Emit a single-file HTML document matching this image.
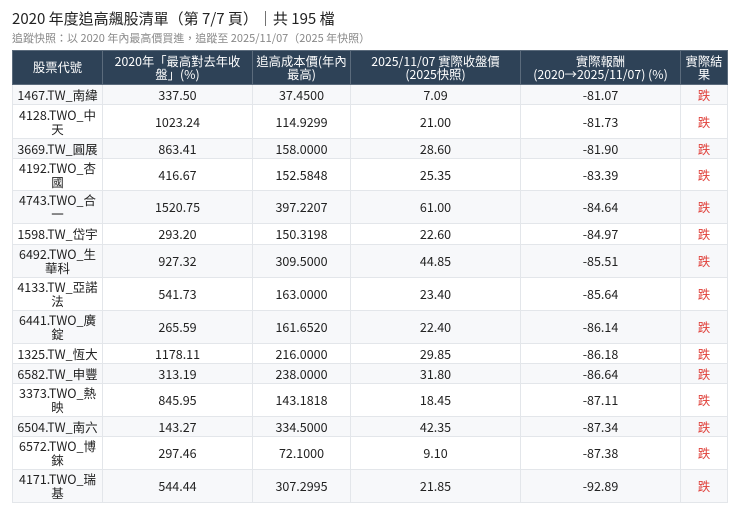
<!DOCTYPE html><html><head><meta charset="utf-8"><style>
body{margin:0;background:#fff;font-family:"Liberation Sans","Noto Sans CJK TC",sans-serif;color:#222;}
h1{position:absolute;left:12px;top:8px;margin:0;font-size:15px;font-weight:normal;color:#222;font-family:"Noto Sans CJK TC",sans-serif;}
.sub{position:absolute;left:12px;top:30px;font-size:11px;color:#888;font-family:"Noto Sans CJK TC",sans-serif;}
table{position:absolute;left:12px;top:50px;border-collapse:collapse;width:715px;table-layout:fixed;font-family:"Noto Sans CJK TC",sans-serif;font-size:12.5px;}
th{background:#2e4257;color:#fff;font-weight:normal;font-size:12.3px;line-height:13px;height:33px;padding:0 3px;border:1px solid #5b6b7c;text-align:center;}
td{border:1px solid #e3e6ea;text-align:center;padding:0 3px;line-height:14px;}
tr:nth-child(even) td{background:#f7f8fa;}
td.r{color:#e0403a;}
</style></head><body>
<h1>2020 年度追高飆股清單（第 7/7 頁）｜共 195 檔</h1>
<div class="sub">追蹤快照：以 2020 年內最高價買進，追蹤至 2025/11/07（2025 年快照）</div>
<table>
<colgroup><col style="width:90px"><col style="width:150px"><col style="width:98px"><col style="width:170px"><col style="width:160px"><col style="width:47px"></colgroup>
<tr><th>股票代號</th><th>2020年「最高對去年收<br>盤」(%)</th><th>追高成本價(年內<br>最高)</th><th>2025/11/07 實際收盤價<br>(2025快照)</th><th>實際報酬<br>(2020→2025/11/07) (%)</th><th>實際結<br>果</th></tr>
<tr style="height:20px"><td>1467.TW_南緯</td><td>337.50</td><td>37.4500</td><td>7.09</td><td>-81.07</td><td class="r">跌</td></tr>
<tr style="height:34px"><td>4128.TWO_中<br>天</td><td>1023.24</td><td>114.9299</td><td>21.00</td><td>-81.73</td><td class="r">跌</td></tr>
<tr style="height:20px"><td>3669.TW_圓展</td><td>863.41</td><td>158.0000</td><td>28.60</td><td>-81.90</td><td class="r">跌</td></tr>
<tr style="height:32px"><td>4192.TWO_杏<br>國</td><td>416.67</td><td>152.5848</td><td>25.35</td><td>-83.39</td><td class="r">跌</td></tr>
<tr style="height:33px"><td>4743.TWO_合<br>一</td><td>1520.75</td><td>397.2207</td><td>61.00</td><td>-84.64</td><td class="r">跌</td></tr>
<tr style="height:21px"><td>1598.TW_岱宇</td><td>293.20</td><td>150.3198</td><td>22.60</td><td>-84.97</td><td class="r">跌</td></tr>
<tr style="height:33px"><td>6492.TWO_生<br>華科</td><td>927.32</td><td>309.5000</td><td>44.85</td><td>-85.51</td><td class="r">跌</td></tr>
<tr style="height:33px"><td>4133.TW_亞諾<br>法</td><td>541.73</td><td>163.0000</td><td>23.40</td><td>-85.64</td><td class="r">跌</td></tr>
<tr style="height:33px"><td>6441.TWO_廣<br>錠</td><td>265.59</td><td>161.6520</td><td>22.40</td><td>-86.14</td><td class="r">跌</td></tr>
<tr style="height:20px"><td>1325.TW_恆大</td><td>1178.11</td><td>216.0000</td><td>29.85</td><td>-86.18</td><td class="r">跌</td></tr>
<tr style="height:20px"><td>6582.TW_申豐</td><td>313.19</td><td>238.0000</td><td>31.80</td><td>-86.64</td><td class="r">跌</td></tr>
<tr style="height:33px"><td>3373.TWO_熱<br>映</td><td>845.95</td><td>143.1818</td><td>18.45</td><td>-87.11</td><td class="r">跌</td></tr>
<tr style="height:20px"><td>6504.TW_南六</td><td>143.27</td><td>334.5000</td><td>42.35</td><td>-87.34</td><td class="r">跌</td></tr>
<tr style="height:33px"><td>6572.TWO_博<br>錸</td><td>297.46</td><td>72.1000</td><td>9.10</td><td>-87.38</td><td class="r">跌</td></tr>
<tr style="height:33px"><td>4171.TWO_瑞<br>基</td><td>544.44</td><td>307.2995</td><td>21.85</td><td>-92.89</td><td class="r">跌</td></tr>
</table>
</body></html>
